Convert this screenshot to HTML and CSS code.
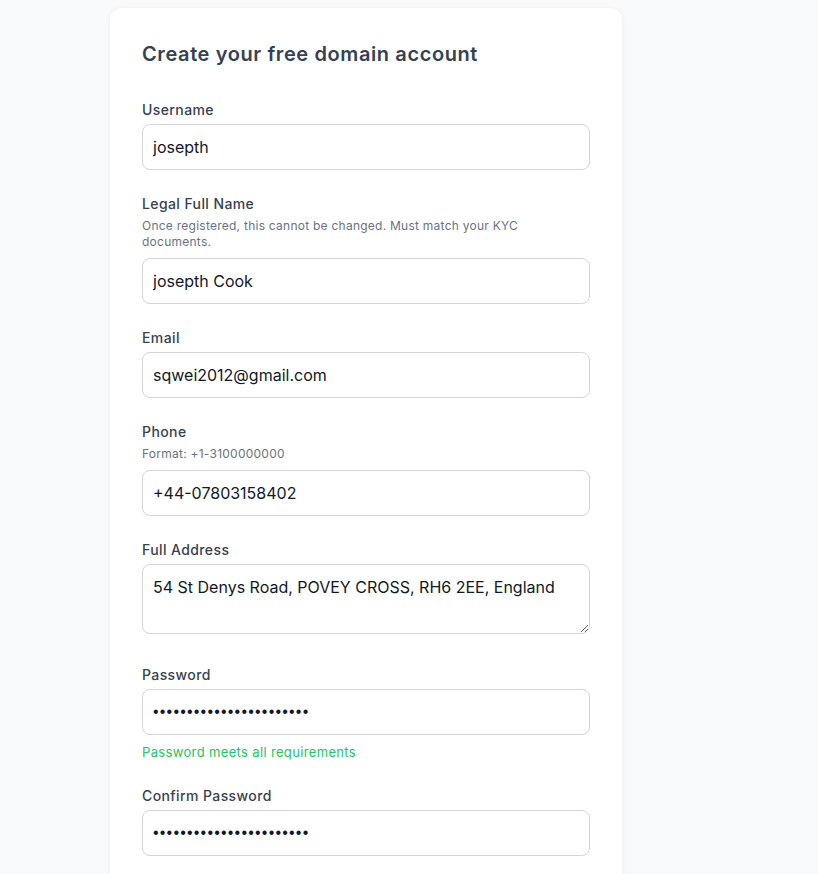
FILE: index.html
```html
<!DOCTYPE html>
<html lang="en">
<head>
<meta charset="utf-8">
<title>Create your free domain account</title>
<link rel="stylesheet" href="styles.css">
</head>
<body>
<main class="page">
  <form class="card">
    <h1 class="title">Create your free domain account</h1>

    <div class="field">
      <label class="label" for="username">Username</label>
      <input class="input" id="username" type="text" value="josepth">
    </div>

    <div class="field">
      <label class="label" for="legal">Legal Full Name</label>
      <p class="help help-wrap">Once registered, this cannot be changed. Must match your KYC documents.</p>
      <input class="input" id="legal" type="text" value="josepth Cook">
    </div>

    <div class="field">
      <label class="label" for="email">Email</label>
      <input class="input" id="email" type="email" value="sqwei2012@gmail.com">
    </div>

    <div class="field">
      <label class="label" for="phone">Phone</label>
      <p class="help">Format: +1-3100000000</p>
      <input class="input" id="phone" type="text" value="+44-07803158402">
    </div>

    <div class="field field-address">
      <label class="label" for="address">Full Address</label>
      <textarea class="input textarea" id="address">54 St Denys Road, POVEY CROSS, RH6 2EE, England</textarea>
    </div>

    <div class="field">
      <label class="label" for="password">Password</label>
      <input class="input password" id="password" type="password" value="abcdefghijklmnopqrstuvw">
      <p class="ok">Password meets all requirements</p>
    </div>

    <div class="field">
      <label class="label" for="confirm">Confirm Password</label>
      <input class="input password" id="confirm" type="password" value="abcdefghijklmnopqrstuvw">
    </div>
  </form>
</main>
</body>
</html>
```

FILE: styles.css
```css
* { box-sizing: border-box; }

html, body {
  margin: 0;
  padding: 0;
  background: #f8f9fb;
  font-family: Inter, "Noto Sans", sans-serif;
}

.page {
  display: flex;
  justify-content: flex-start;
  padding: 8px 0 40px 110px;
}

.card {
  width: 512px;
  background: #ffffff;
  border-radius: 12px;
  box-shadow: 0 1px 6px rgba(17, 24, 39, 0.05), 0 0 1px rgba(17, 24, 39, 0.04);
  padding: 32px 32px 40px;
  display: flex;
  flex-direction: column;
  gap: 24px;
}

.title {
  margin: 0 0 8px;
  font-size: 20px;
  line-height: 28px;
  font-weight: 600;
  color: #374151;
  letter-spacing: 0.6px;
}

.field {
  display: flex;
  flex-direction: column;
}

.field-address { margin-bottom: 7px; }

.label {
  font-size: 14px;
  line-height: 20px;
  font-weight: 500;
  color: #374151;
  margin-bottom: 4px;
  letter-spacing: 0.4px;
}

.help {
  margin: 0 0 8px;
  font-size: 12px;
  line-height: 16px;
  color: #6b7280;
  letter-spacing: 0.25px;
}

.help-wrap { max-width: 410px; }

.input {
  display: block;
  width: 100%;
  height: 46px;
  margin: 0;
  padding: 0 10px;
  border: 1px solid #d4d5da;
  border-radius: 8px;
  background: #ffffff;
  font-family: inherit;
  font-size: 16px;
  color: #111827;
  outline: none;
}

.textarea {
  height: 70px;
  padding: 10px 10px;
  line-height: 24px;
  resize: vertical;
}

.password {
  font-family: "Liberation Sans", sans-serif;
  font-size: 16px;
  letter-spacing: 1.2px;
}

.ok {
  margin: 7px 0 0;
  font-size: 13px;
  line-height: 20px;
  color: #22c55e;
  letter-spacing: 0.35px;
}
```
